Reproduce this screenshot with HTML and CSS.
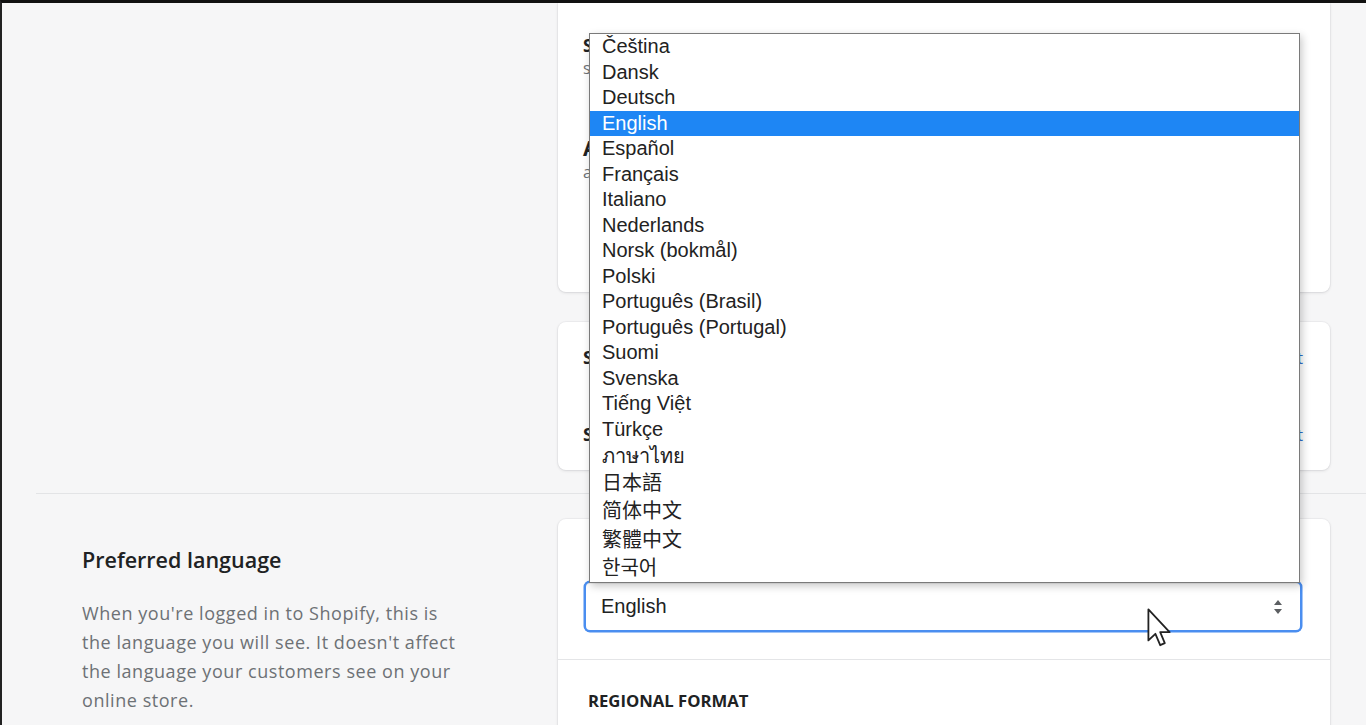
FILE: index.html
```html
<!DOCTYPE html>
<html lang="en">
<head>
<meta charset="utf-8">
<title>Preferences</title>
<link rel="stylesheet" href="styles.css">
</head>
<body>
<div class="frame">
  <section class="section section-top">
    <div class="aside"></div>
    <div class="stack">
      <div class="card card-security">
        <div class="c-title">Sessions</div>
        <div class="c-sub">see where you're logged in</div>
        <div class="c-head">Apps</div>
        <div class="c-sub">apps with access</div>
      </div>
      <div class="card card-staff">
        <div class="row"><span class="r-title">Store owner</span><span class="r-link">Log out</span></div>
        <div class="row"><span class="r-title">Staff accounts</span><span class="r-link">Log out</span></div>
      </div>
    </div>
  </section>
  <section class="section section-lang">
    <div class="aside">
      <h2 class="aside-title">Preferred language</h2>
      <p class="aside-text">When you're logged in to Shopify, this is the language you will see. It doesn't affect the language your customers see on your online store.</p>
    </div>
    <div class="stack">
      <div class="card card-lang">
        <div class="lang-body">
          <div class="select">
            <span class="select-value">English</span>
            <svg class="select-arrows" width="10" height="16" viewBox="0 0 10 16"><path d="M5 1 L9 6 H1 Z M1 10 H9 L5 15 Z" fill="#5c5f62"/></svg>
          </div>
        </div>
        <div class="lang-foot">
          <div class="foot-title">Regional format</div>
        </div>
      </div>
    </div>
  </section>

  <ul class="dropdown">
    <li>Čeština</li>
    <li>Dansk</li>
    <li>Deutsch</li>
    <li class="selected">English</li>
    <li>Español</li>
    <li>Français</li>
    <li>Italiano</li>
    <li>Nederlands</li>
    <li>Norsk (bokmål)</li>
    <li>Polski</li>
    <li>Português (Brasil)</li>
    <li>Português (Portugal)</li>
    <li>Suomi</li>
    <li>Svenska</li>
    <li>Tiếng Việt</li>
    <li>Türkçe</li>
    <li class="t28">ภาษาไทย</li>
    <li class="t27">日本語</li>
    <li class="t29">简体中文</li>
    <li class="t29">繁體中文</li>
    <li class="t27">한국어</li>
  </ul>

  <svg class="cursor" width="26" height="40" viewBox="0 0 13 20"><path d="M0.7 0.7 L0.7 16.2 L4.2 12.9 L6.6 18.6 L8.9 17.6 L6.6 12.1 L11.3 12.1 Z" fill="#fff" stroke="#222" stroke-width="0.9" stroke-linejoin="round"/></svg>
</div>
</body>
</html>
```

FILE: styles.css
```css
* { box-sizing: border-box; }
html, body { margin: 0; padding: 0; }
body {
  width: 1366px;
  height: 725px;
  overflow: hidden;
  background: #f6f6f7;
  font-family: "Open Sans", "Noto Sans", sans-serif;
}
.frame {
  position: relative;
  width: 1366px;
  height: 725px;
  border-top: 3px solid #111;
  border-left: 2px solid #222;
  overflow: hidden;
  background: #f6f6f7;
}
.section {
  display: grid;
  grid-template-columns: 522px 772px;
  margin-left: 34px;
}
.section-top {
  padding-bottom: 23px;
  border-bottom: 1px solid #e3e4e6;
}
.section-lang {
  padding-top: 25px;
}
.stack {
  display: flex;
  flex-direction: column;
  gap: 30px;
}
.card {
  background: #fff;
  border-radius: 8px;
  box-shadow: 0 0 0 1px rgba(63,63,68,0.04), 0 1px 3px rgba(63,63,68,0.14);
}
.card-security {
  height: 289px;
  border-radius: 0 0 8px 8px;
  padding: 32px 25px 0 25px;
}
.c-title {
  font-size: 17px;
  font-weight: 700;
  line-height: 22px;
  color: #202223;
}
.c-sub {
  font-size: 16px;
  line-height: 22px;
  color: #6d7175;
}
.c-head {
  margin-top: 56px;
  font-size: 21px;
  font-weight: 700;
  line-height: 26px;
  color: #202223;
}
.card-staff {
  height: 148px;
  padding: 23px 27px 0 25px;
}
.row {
  display: flex;
  justify-content: space-between;
  align-items: center;
  height: 24px;
  margin-bottom: 53px;
}
.r-title {
  font-size: 18px;
  font-weight: 700;
  color: #202223;
}
.r-link {
  font-size: 17px;
  color: #2c6ecb;
}
.aside {
  padding-left: 46px;
}
.aside-title {
  margin: 27px 0 0 0;
  font-size: 21.5px;
  font-weight: 600;
  line-height: 28px;
  color: #202223;
}
.aside-title + .aside-text { margin-top: 25px; }
.aside-text {
  margin: 0;
  width: 382px;
  font-size: 18px;
  letter-spacing: 0.55px;
  line-height: 29px;
  color: #6d7175;
}
.card-lang {
  height: 260px;
}
.lang-body {
  padding: 62px 28px 27px 26px;
  border-bottom: 1px solid #e4e5e7;
}
.select {
  display: flex;
  align-items: center;
  justify-content: space-between;
  height: 51px;
  padding: 0 17px 0 15px;
  border: 2px solid #4a8ef0;
  border-radius: 6px;
  background: #fff;
  box-shadow: inset 0 1px 0 rgba(0,0,0,0.06), 0 0 0 0.5px #4a8ef0;
}
.select-value {
  font-family: "Liberation Sans", Arial, sans-serif;
  font-size: 20px;
  color: #202223;
}
.lang-foot {
  padding: 30px 30px 0 30px;
}
.foot-title {
  font-size: 16.7px;
  font-weight: 700;
  text-transform: uppercase;
  line-height: 22px;
  color: #202223;
}
.dropdown {
  position: absolute;
  left: 587px;
  top: 30px;
  width: 711px;
  margin: 0;
  padding: 0;
  list-style: none;
  background: #fff;
  border: 1px solid #7a7a7a;
  box-shadow: 2px 3px 8px rgba(0,0,0,0.22);
  font-family: "Liberation Sans", Arial, "Noto Sans CJK SC", "Noto Sans CJK KR", sans-serif;
  font-size: 20px;
  color: #222;
}
.dropdown li {
  height: 25.5px;
  line-height: 25.5px;
  padding-left: 12px;
  white-space: nowrap;
}
.dropdown li.selected {
  background: #1e86f4;
  color: #fff;
}
.dropdown li.t27 { height: 27px; line-height: 27px; }
.dropdown li.t28 { height: 28px; line-height: 28px; }
.dropdown li.t29 { height: 29px; line-height: 29px; }
.cursor {
  position: absolute;
  left: 1145px;
  top: 605px;
}
```
